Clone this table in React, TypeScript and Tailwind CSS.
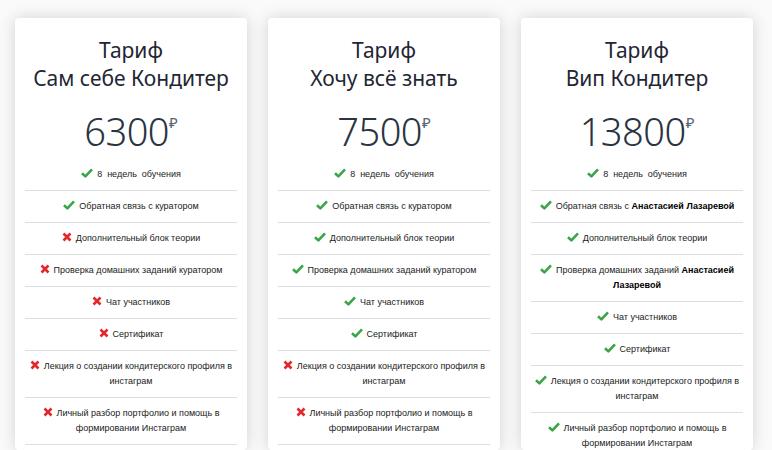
import React from "react";

type Item = { ok: boolean; text: React.ReactNode };

const Name = () => <span className="font-bold text-black">Анастасией Лазаревой</span>;

const lecture = "Лекция о создании кондитерского профиля в\nинстаграм";
const review = "Личный разбор портфолио и помощь в\nформировании Инстаграм";

const plans: { title: string; price: string; items: Item[] }[] = [
  {
    title: "Сам себе Кондитер",
    price: "6300",
    items: [
      { ok: true, text: "8  недель  обучения" },
      { ok: true, text: "Обратная связь с куратором" },
      { ok: false, text: "Дополнительный блок теории" },
      { ok: false, text: "Проверка домашних заданий куратором" },
      { ok: false, text: "Чат участников" },
      { ok: false, text: "Сертификат" },
      { ok: false, text: lecture },
      { ok: false, text: review },
    ],
  },
  {
    title: "Хочу всё знать",
    price: "7500",
    items: [
      { ok: true, text: "8  недель  обучения" },
      { ok: true, text: "Обратная связь с куратором" },
      { ok: true, text: "Дополнительный блок теории" },
      { ok: true, text: "Проверка домашних заданий куратором" },
      { ok: true, text: "Чат участников" },
      { ok: true, text: "Сертификат" },
      { ok: false, text: lecture },
      { ok: false, text: review },
    ],
  },
  {
    title: "Вип Кондитер",
    price: "13800",
    items: [
      { ok: true, text: "8  недель  обучения" },
      { ok: true, text: <>Обратная связь с <Name /></> },
      { ok: true, text: "Дополнительный блок теории" },
      { ok: true, text: <>Проверка домашних заданий <Name /></> },
      { ok: true, text: "Чат участников" },
      { ok: true, text: "Сертификат" },
      { ok: true, text: lecture },
      { ok: true, text: review },
    ],
  },
];

const Check = () => (
  <svg width="12" height="10" viewBox="0 0 12 10" className="inline-block align-[-1px] mr-[4px]">
    <path d="M1 5.2 L4.4 8.4 L11 1.4" fill="none" stroke="#3ba447" strokeWidth="2.6" strokeLinejoin="round" />
  </svg>
);

const Cross = () => (
  <svg width="10" height="10" viewBox="0 0 10 10" className="inline-block align-[-1px] mr-[4px]">
    <path d="M1.5 1.5 L8.5 8.5 M8.5 1.5 L1.5 8.5" fill="none" stroke="#e2262a" strokeWidth="2.6" />
  </svg>
);

export default function App() {
  return (
    <div
      className="w-[772px] h-[450px] overflow-hidden bg-[#fafafa] flex gap-[21px] pl-[15px] pt-[18px]"
      style={{ fontFamily: '"Noto Sans", "Open Sans", sans-serif' }}
    >
      {plans.map((plan) => (
        <div
          key={plan.title}
          className="w-[232px] shrink-0 bg-white rounded-[4px] shadow-[0_0_16px_rgba(0,0,0,0.16)] px-[10px] pt-[18px] pb-[40px] flex flex-col"
        >
          <div className="text-center text-[21px] leading-[28px] text-[#1f2633]">
            <div>Тариф</div>
            <div>{plan.title}</div>
          </div>
          <div className="mt-[17px] mb-[6px] flex justify-center text-[#2a3442]">
            <span className="text-[38px] leading-[44px] tracking-[-0.5px] font-light">{plan.price}</span>
            <span className="text-[15px] leading-none mt-[6px] text-[#5a6270]">₽</span>
          </div>
          <ul className="flex flex-col font-['Liberation_Sans',Arial,sans-serif]">
            {plan.items.map((item, i) => (
              <li
                key={i}
                className="border-b border-[#dedede] py-[8px] text-center text-[9px] leading-[15px] text-[#222] whitespace-pre-wrap"
              >
                {item.ok ? <Check /> : <Cross />}
                {item.text}
              </li>
            ))}
          </ul>
        </div>
      ))}
    </div>
  );
}
